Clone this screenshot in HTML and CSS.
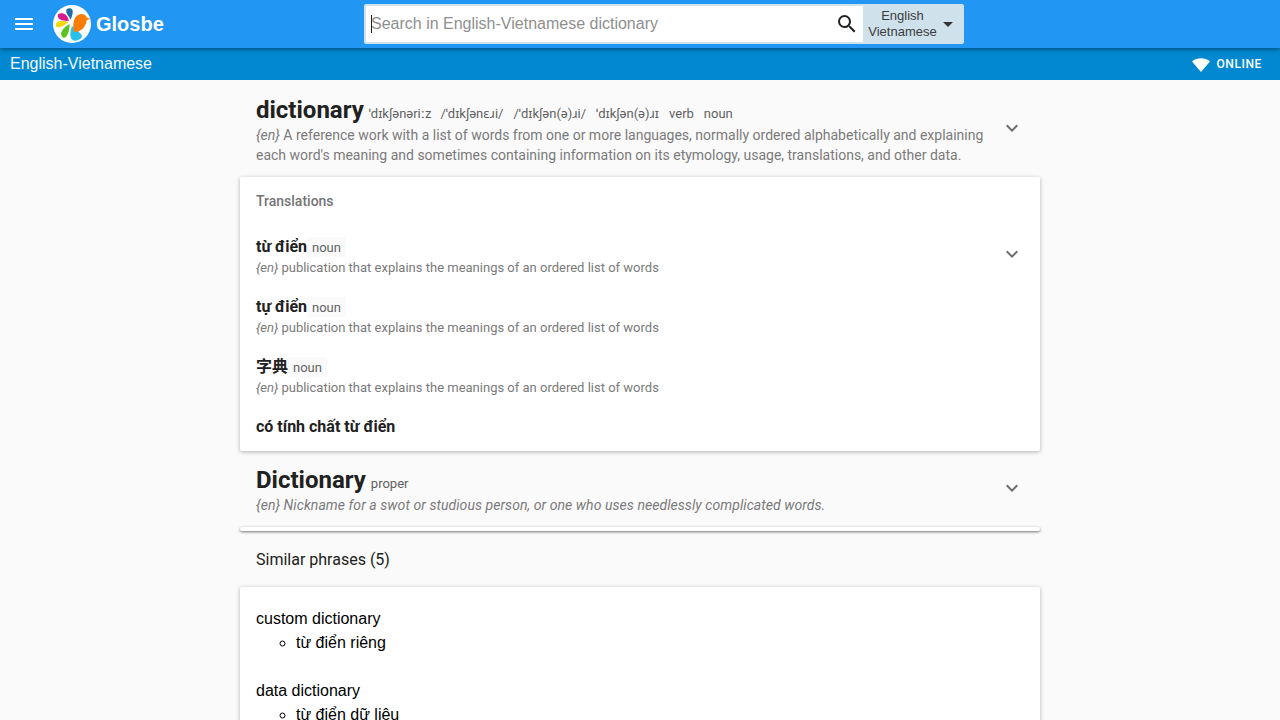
FILE: index.html
```html
<!DOCTYPE html>
<html lang="en">
<head>
<meta charset="utf-8">
<title>dictionary in Vietnamese - English-Vietnamese Dictionary | Glosbe</title>
<link rel="stylesheet" href="styles.css">
</head>
<body>
<header class="topbar">
  <button class="menu-btn" aria-label="Menu">
    <svg width="24" height="24" viewBox="0 0 24 24"><path fill="#fff" d="M3 18h18v-2H3v2zm0-5h18v-2H3v2zm0-7v2h18V6H3z"/></svg>
  </button>
  <a class="brand">
    <svg class="logo" width="38" height="38" viewBox="0 0 38 38">
      <circle cx="19" cy="19" r="19" fill="#fff"/>
      <path fill="#1d6fa5" d="M14 4c1.800-1.200 4.700-.9 5.500 1 .8 2.200-.4 6.500-1.800 9.500-1.500-2.500-3.200-4-4-6.200C13.200 6.800 13 5 14 4z"/>
      <path fill="#d81b8c" d="M5 9.500c2.400-1.800 6-1.300 8 .4 1.700 1.500 2.400 3.600 3 5.900-3 .2-6.200.2-8.700-1.200C5.500 13.600 4 11.300 5 9.500z"/>
      <path fill="#f5d90a" d="M3.200 21.500c-.9-2.500.3-4.800 2.700-5.300 3.200-.6 6.500 0 9.500 1.100-2.500 2-5.300 4-8.300 4.800-1.500.4-3.100.4-3.900-.6z"/>
      <path fill="#5cc21f" d="M10 32.500c-2.200-1.500-2.500-4.200-1-6.500 1.700-3 4.600-5.500 7.600-7 0 3.400-.5 7.500-2.200 10.700-.9 1.800-2.500 3.800-4.400 2.800z"/>
      <path fill="#29c0ea" d="M24 35.500c-3.200.9-6-.9-6.500-4-.5-3.500.2-7.300 1.500-10.500 2.800 2.500 7 5.500 9.500 8.800 1.700 2.400-1.700 5-4.500 5.700z"/>
      <path fill="#f97c05" d="M21 27C19 19 21 9 28.500 9c2.500 0 4.500 1.500 5.500 3.500l3.500 1.500-3.700 1C33 20 30 27 21 27z"/>
    </svg>
    <span class="brand-name">Glosbe</span>
  </a>
  <form class="search">
    <div class="search-field">
      <input class="search-input" type="text" placeholder="Search in English-Vietnamese dictionary">
      <span class="caret"></span>
    </div>
    <button class="search-btn" type="button" aria-label="Search">
      <svg width="24" height="24" viewBox="0 0 24 24"><path fill="#212121" d="M15.500 14h-.79l-.28-.27A6.470 6.470 0 0 0 16 9.500 6.500 6.500 0 1 0 9.500 16c1.610 0 3.090-.59 4.230-1.570l.27.28v.79l5 4.990L20.490 19l-4.990-5zm-6 0C7.010 14 5 11.990 5 9.500S7.010 5 9.500 5 14 7.010 14 9.500 11.990 14 9.500 14z"/></svg>
    </button>
    <div class="lang-picker">
      <div class="lang-names"><span>English</span><span>Vietnamese</span></div>
      <span class="lang-arrow"></span>
    </div>
  </form>
</header>
<div class="subbar">
  <span class="subbar-title">English-Vietnamese</span>
  <span class="status">
    <svg width="18" height="14" viewBox="0 0 18 14"><path fill="#fff" d="M9 14 0 3.500C2.300 1.500 5.500.3 9 .3s6.700 1.200 9 3.200L9 14z"/></svg>
    <span class="status-text">ONLINE</span>
  </span>
</div>
<main class="content">
  <section class="entry entry-main">
    <div class="entry-body">
      <div class="headline">
        <h1 class="headword">dictionary</h1>
        <span class="phon">ˈdɪkʃənəriːz</span>
        <span class="phon">/ˈdɪkʃənɛɹi/</span>
        <span class="phon">/ˈdɪkʃən(ə)ɹi/</span>
        <span class="phon">ˈdɪkʃən(ə)ɹɪ</span>
        <span class="phon">verb</span>
        <span class="phon">noun</span>
      </div>
      <p class="definition"><i>{en}</i> A reference work with a list of words from one or more languages, normally ordered alphabetically and explaining each word's meaning and sometimes containing information on its etymology, usage, translations, and other data.</p>
    </div>
    <svg class="chevron" width="24" height="24" viewBox="0 0 24 24"><path fill="#6e6e6e" d="M16.590 8.590 12 13.170 7.410 8.590 6 10l6 6 6-6z"/></svg>
  </section>

  <section class="card translations">
    <h2 class="card-title">Translations</h2>
    <div class="tr-row">
      <div class="tr-body">
        <div class="tr-line"><strong class="tr-word">từ điển</strong><span class="pos">noun</span></div>
        <p class="tr-def"><i>{en}</i> publication that explains the meanings of an ordered list of words</p>
      </div>
      <svg class="chevron" width="24" height="24" viewBox="0 0 24 24"><path fill="#6e6e6e" d="M16.590 8.590 12 13.170 7.410 8.590 6 10l6 6 6-6z"/></svg>
    </div>
    <div class="tr-row">
      <div class="tr-body">
        <div class="tr-line"><strong class="tr-word">tự điển</strong><span class="pos">noun</span></div>
        <p class="tr-def"><i>{en}</i> publication that explains the meanings of an ordered list of words</p>
      </div>
    </div>
    <div class="tr-row">
      <div class="tr-body">
        <div class="tr-line"><strong class="tr-word">字典</strong><span class="pos">noun</span></div>
        <p class="tr-def"><i>{en}</i> publication that explains the meanings of an ordered list of words</p>
      </div>
    </div>
    <div class="tr-row tr-last">
      <div class="tr-line"><strong class="tr-word">có tính chất từ điển</strong></div>
    </div>
  </section>

  <section class="entry entry-second">
    <div class="entry-body">
      <div class="headline">
        <h2 class="headword">Dictionary</h2>
        <span class="proper">proper</span>
      </div>
      <p class="definition definition-italic">{en} Nickname for a swot or studious person, or one who uses needlessly complicated words.</p>
    </div>
    <svg class="chevron" width="24" height="24" viewBox="0 0 24 24"><path fill="#6e6e6e" d="M16.590 8.590 12 13.170 7.410 8.590 6 10l6 6 6-6z"/></svg>
  </section>
  <div class="card empty-card"></div>

  <h2 class="similar-title">Similar phrases (5)</h2>
  <section class="card phrases">
    <dl class="phrase">
      <dt>custom dictionary</dt>
      <dd><ul><li>từ điển riêng</li></ul></dd>
    </dl>
    <dl class="phrase">
      <dt>data dictionary</dt>
      <dd><ul><li>từ điển dữ liệu</li></ul></dd>
    </dl>
  </section>
</main>
</body>
</html>
```

FILE: styles.css
```css
* { box-sizing: border-box; }
html, body { margin: 0; padding: 0; height: 720px; overflow: hidden; }
body { background: #fafafa; font-family: Roboto, "Noto Sans CJK SC", sans-serif; color: #212121; }
h1, h2, p, dl, dd, ul { margin: 0; padding: 0; }

.topbar {
  position: relative; z-index: 2;
  height: 48px; background: #2196f3; display: flex; align-items: center;
  box-shadow: 0 2px 4px rgba(0,0,0,.35);
}
.menu-btn { width: 24px; height: 24px; margin-left: 12px; padding: 0; border: 0; background: none; display: block; }
.brand { display: flex; align-items: center; margin-left: 17px; width: 311px; }
.logo { display: block; flex: none; }
.brand-name { margin-left: 5px; font: 700 20px/24px "Liberation Sans", Arial, sans-serif; color: #fff; }

.search {
  width: 600px; height: 40px; display: flex; padding: 2px; margin: 0;
  background: #cfe2ec; border-radius: 2px;
}
.search-field { position: relative; flex: 1; background: #fff; min-width: 0; }
.search-input {
  width: 100%; height: 36px; border: 0; outline: 0; padding: 0 0 0 5px; background: transparent;
  font: 16px "Liberation Sans", Arial, sans-serif; color: #212121;
}
.search-input::placeholder { color: #8f8f8f; opacity: 1; }
.caret { position: absolute; left: 5px; top: 9px; width: 1px; height: 18px; background: #212121; }
.search-btn { width: 32px; height: 36px; padding: 0; border: 0; background: #fff; display: flex; align-items: center; justify-content: center; }
.lang-picker { width: 99px; height: 36px; background: #cfe2ec; display: flex; align-items: center; padding-left: 6px; }
.lang-names { width: 67px; display: flex; flex-direction: column; align-items: center; font: 13px/16px "Liberation Sans", Arial, sans-serif; color: #3c3c3c; }
.lang-arrow { margin-left: 7px; margin-top: 1px; border: 5px solid transparent; border-top-color: #333; border-bottom: 0; }

.subbar {
  position: relative; z-index: 1;
  height: 32px; background: #0288d1; display: flex; align-items: center; justify-content: space-between;
  padding: 0 18px 0 10px; color: #fff;
}
.subbar-title { font: 16px/24px "Liberation Sans", Arial, sans-serif; color: #f2f9fd; }
.status { display: flex; align-items: center; }
.status svg { display: block; margin-top: 2px; }
.status-text { margin-left: 6px; font: 500 12px/16px Roboto, sans-serif; letter-spacing: .6px; }

.content { width: 800px; margin: 0 auto; }
.entry { display: flex; align-items: center; padding: 0 16px; }
.entry-body { flex: 1; min-width: 0; }
.entry .chevron { flex: none; }
.entry-main { height: 97px; padding-top: 14px; padding-bottom: 12px; }
.entry-main .chevron { margin-bottom: 3px; }
.headline { display: flex; align-items: baseline; padding-top: 1px; }
.headword { font: 700 24px/30px Roboto, sans-serif; color: #212121; }
.phon { font: 13px/16px Roboto, "Noto Sans", sans-serif; color: #616161; margin-left: 10px; }
.headword + .phon { margin-left: 5px; }
.headword + .phon + .phon { margin-left: 9px; }
.definition { font: 14px/20px Roboto, sans-serif; color: #7a7a7a; width: 736px; }
.definition-italic { font-style: italic; letter-spacing: .06px; }

.card { background: #fff; border-radius: 2px; box-shadow: 0 1px 4px rgba(0,0,0,.3); }
.translations { height: 274px; padding: 14px 16px 0; }
.card-title { font: 500 14px/20px Roboto, sans-serif; color: #757575; margin-bottom: 21px; }
.tr-row { display: flex; align-items: center; height: 60px; padding-bottom: 11px; }
.tr-row .chevron { margin-bottom: 6px; }
.tr-last { height: 24px; padding: 0; margin-top: 3px; }
.tr-body { flex: 1; min-width: 0; align-self: flex-start; margin-top: 4px; }
.tr-line { display: flex; align-items: center; height: 21px; }
.tr-word { font: 700 16px/20px Roboto, "Noto Sans CJK SC", sans-serif; color: #212121; }
.pos { font: 13px/21px Roboto, sans-serif; color: #616161; background: #fafafa; padding: 0 5px; height: 20px; }
.tr-def { font: 13px/20px Roboto, sans-serif; color: #7a7a7a; margin-top: 1px; }

.entry-second { height: 76px; padding-top: 6px; padding-bottom: 6px; }
.entry-second .chevron { margin-bottom: 2px; }
.entry-second .proper { font: 13px/16px Roboto, sans-serif; color: #616161; margin-left: 5px; }
.empty-card { height: 4px; box-shadow: 0 1px 3px rgba(0,0,0,.55); }

.similar-title { font: 400 16px/24px Roboto, sans-serif; color: #212121; padding: 17px 16px 0; height: 56px; }
.phrases { padding: 20px 16px 0; height: 200px; font: 16px/24px "Liberation Sans", Arial, sans-serif; color: #000; }
.phrase { margin-bottom: 24px; }
.phrase ul { padding-left: 40px; list-style: circle; }
```
